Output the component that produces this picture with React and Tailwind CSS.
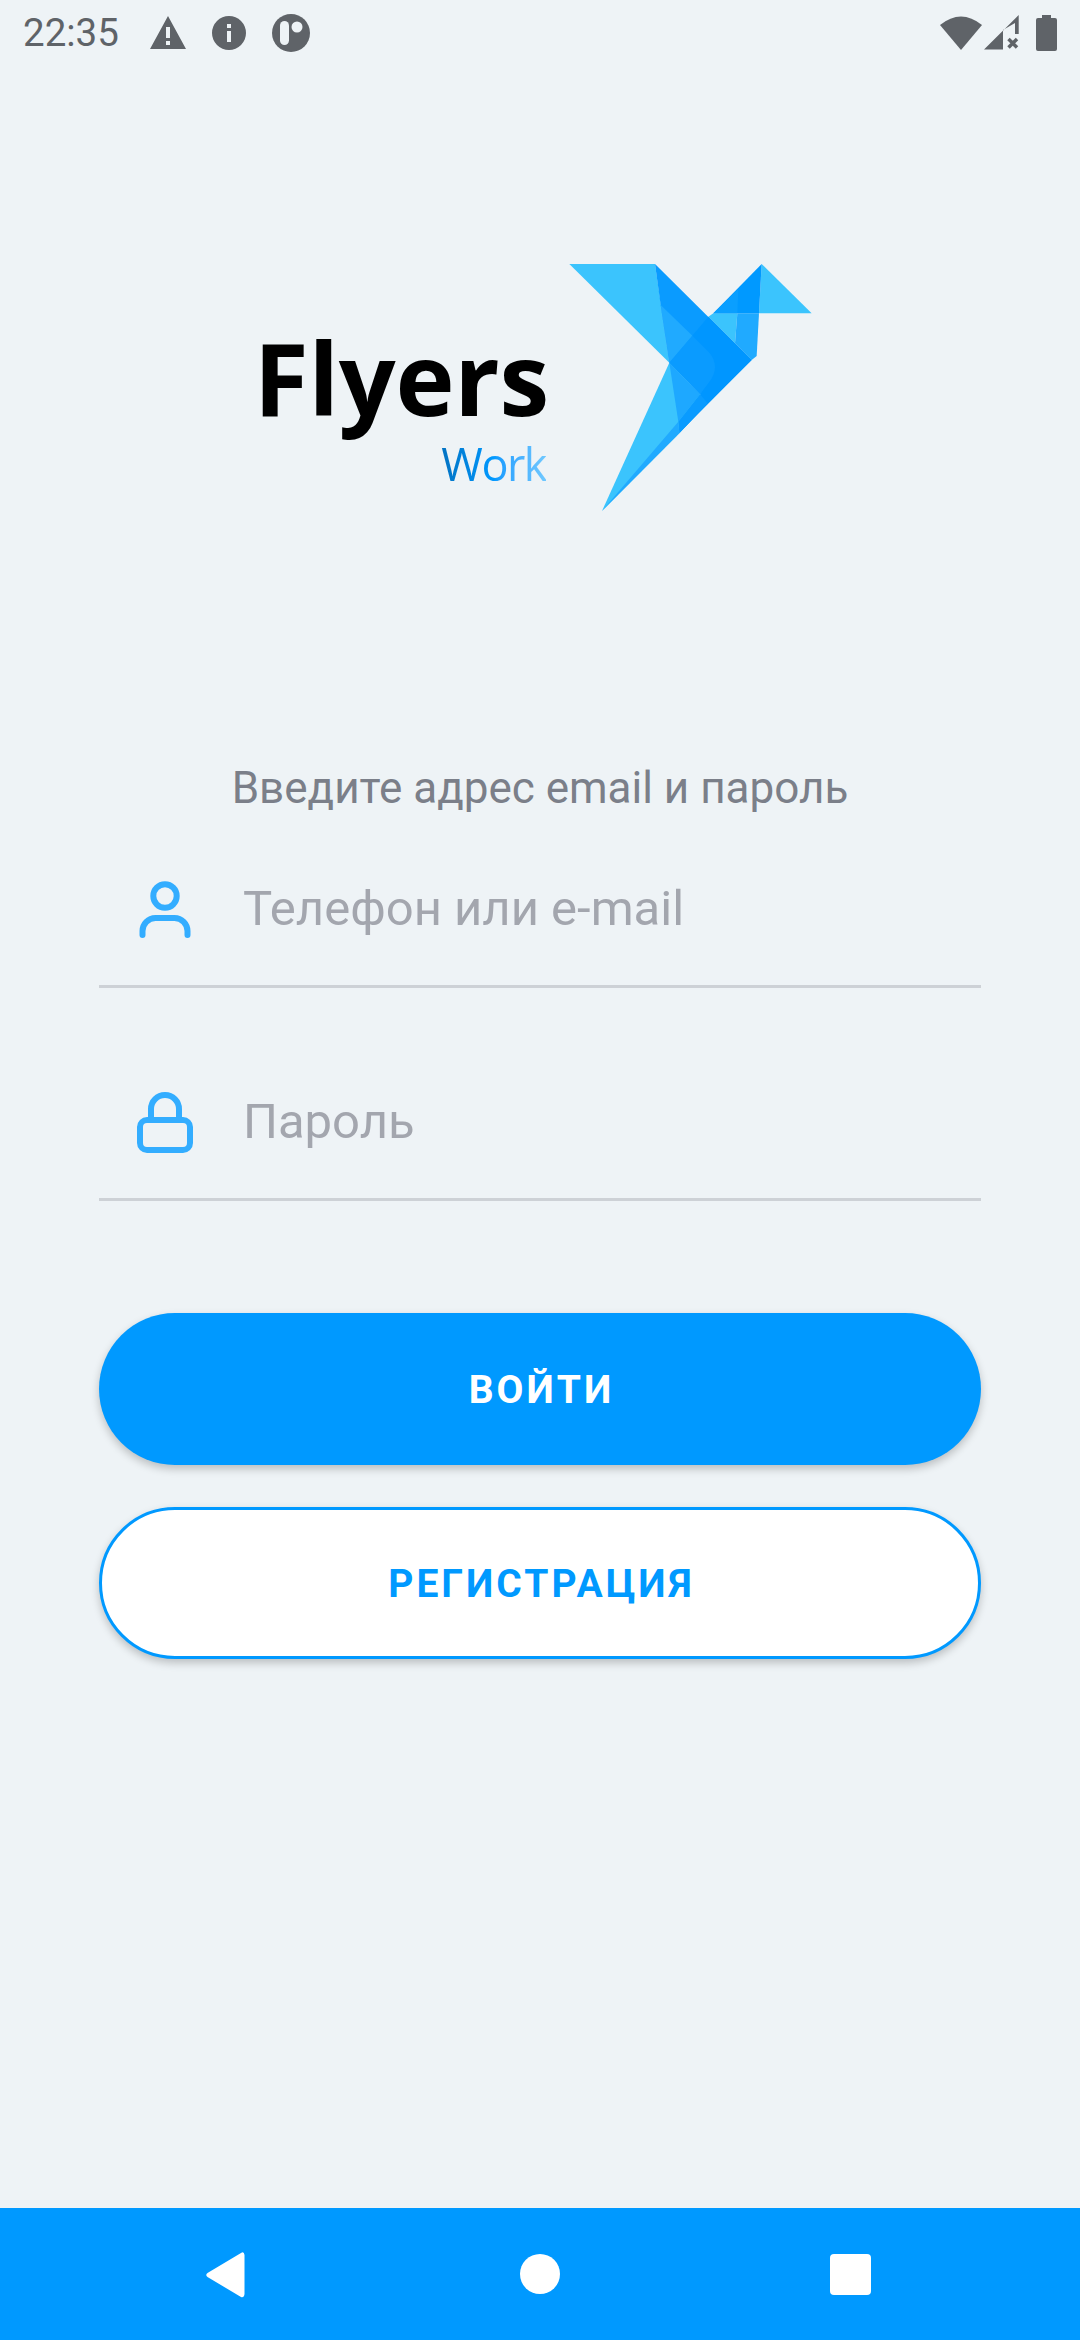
const ROBOTO = "font-['Roboto',sans-serif]";

function Bird() {
  return (
    <svg width="290" height="270" viewBox="0 0 870 810" className="shrink-0">
      <polygon points="88,42 345,42 388,338" fill="#3bc4fd" />
      <polygon points="388,338 186,783 418,550 500,462 480,433" fill="#3bc4fd" />
      <polygon points="665,42 815,190 657,190" fill="#3bc4fd" />
      <polygon points="505,200 520,190 592,190 585,280" fill="#3bc4fd" />
      <polygon points="592,190 657,190 650,318 635,330 585,280" fill="#20aaff" />
      <polygon points="665,42 520,190 657,190" fill="#0099ff" />
      <polygon points="595,116 520,190 592,190" fill="#0a9fff" />
      <polygon points="345,42 635,330 503,460 480,433 388,338 362,165" fill="#0a9bff" />
      <polygon points="362,165 458,258 388,338" fill="#20aaff" />
      <path d="M388 338 L505 200 L635 330 L418 548 L500 400 Q545 350 505 305 L458 258 Z" fill="#0096ff" />
      <path d="M458 258 L505 305 Q545 350 505 400 L480 433 L388 338 Z" fill="#0a9bff" />
      <polygon points="388,338 480,433 415,515" fill="#1ea8ff" />
      <polygon points="480,433 503,460 418,550 415,515" fill="#0a9bff" />
      <polygon points="415,515 418,550 186,783" fill="#20aaff" />
    </svg>
  );
}

function Logo() {
  return (
    <div className="mt-[184px] flex h-[270px] items-start pl-[256px]">
      <div className="mt-[77px] flex w-[293px] flex-col items-end font-['Open_Sans',sans-serif]">
        <div className="text-[100px] leading-[100px] font-bold tracking-[-0.2px] text-black">Flyers</div>
        <div className="mt-[11px] mr-[3px] bg-gradient-to-r from-[#0272c2] via-[#0099ff] to-[#6fc8ff] bg-clip-text text-[45px] leading-[52px] font-normal tracking-[-1.5px] text-transparent">
          Work
        </div>
      </div>
      <div className="ml-[-9px]">
        <Bird />
      </div>
    </div>
  );
}

function StatusBar() {
  return (
    <div className="flex h-[66px] items-center text-[#5f6368]">
      <span className={`ml-[23px] w-[95px] text-[38.5px] leading-none ${ROBOTO}`}>22:35</span>
      <svg width="38" height="36" viewBox="0 0 38 36" className="ml-[31px]">
        <path fillRule="evenodd" d="M19 1 L37 34 H1 Z M17 12 V23 H21 V12 Z M17 26 V30 H21 V26 Z" fill="currentColor" />
      </svg>
      <svg width="36" height="36" viewBox="0 0 36 36" className="ml-[24px]">
        <path fillRule="evenodd" d="M18 1 A17 17 0 1 0 18 35 A17 17 0 1 0 18 1 Z M16 9 V13 H20 V9 Z M16 16 V27 H20 V16 Z" fill="currentColor" />
      </svg>
      <svg width="38" height="38" viewBox="0 0 38 38" className="ml-[25px]">
        <circle cx="19" cy="19" r="19" fill="currentColor" />
        <rect x="8" y="7" width="9" height="24" rx="4.5" fill="#eef3f6" />
        <circle cx="25" cy="13" r="5.5" fill="#eef3f6" />
      </svg>
      <svg width="42" height="36" viewBox="0 0 42 36" className="ml-auto">
        <path d="M0 10 Q21 -7 42 10 L21 35 Z" fill="currentColor" />
      </svg>
      <svg width="36" height="36" viewBox="0 0 36 36" className="ml-[2px]">
        <path d="M34.7 0 V19 H31 V8 L19 15 V34.5 H0 Z" fill="currentColor" />
        <path d="M24.5 24 L33 32.5 M33 24 L24.5 32.5" stroke="currentColor" strokeWidth="3.5" />
      </svg>
      <svg width="22" height="36" viewBox="0 0 22 36" className="mr-[22px] ml-[16px]">
        <path d="M6 0 H15 V3 H19 Q21 3 21 5 V34 Q21 36 19 36 H2 Q0 36 0 34 V5 Q0 3 2 3 H6 Z" fill="currentColor" />
      </svg>
    </div>
  );
}

function UserIcon() {
  return (
    <svg width="60" height="70" viewBox="135 875 60 70" fill="none" stroke="#33adff" strokeWidth="6" strokeLinecap="round">
      <circle cx="165" cy="896" r="11.7" />
      <path d="M142.5 935 v-4 a13 13 0 0 1 13 -13 h19 a13 13 0 0 1 13 13 v4" />
    </svg>
  );
}

function LockIcon() {
  return (
    <svg width="60" height="70" viewBox="135 1088 60 70" fill="none" stroke="#33adff" strokeWidth="6">
      <rect x="140" y="1120" width="50" height="30" rx="7" />
      <path d="M151 1120 v-11 a14 14 0 0 1 28 0 v11" />
    </svg>
  );
}

function Field({ icon, label, className }) {
  return (
    <div className={`mx-[99px] flex h-[113px] items-start border-b-[3px] border-[#cdd1d6] pl-[36px] ${className}`}>
      {icon}
      <span className={`ml-[48px] text-[49px] leading-[68px] text-[#a3a6ae] ${ROBOTO}`}>{label}</span>
    </div>
  );
}

function NavBar() {
  return (
    <div className="mt-auto flex h-[132px] items-start bg-[#0099ff] pt-[44px]">
      <svg width="39" height="46" viewBox="0 0 39 46" className="ml-[206px]">
        <path d="M35 1 Q38 -1 38.5 3 V42 Q38 46 35 45 L1.5 25 Q-1 23 1.5 21 Z" fill="#fff" />
      </svg>
      <div className="mt-[2px] ml-[275px] h-[40px] w-[40px] rounded-full bg-white" />
      <div className="mt-[2px] ml-[270px] h-[41px] w-[41px] rounded-[4px] bg-white" />
    </div>
  );
}

export default function App() {
  return (
    <div className={`flex h-[2340px] w-[1080px] flex-col bg-[#eef3f6] ${ROBOTO}`}>
      <StatusBar />
      <Logo />
      <div className="mt-[243px] text-center text-[44px] leading-[50px] text-[#7b7f89]">Введите адрес email и пароль</div>
      <Field icon={<UserIcon />} label="Телефон или e-mail" className="mt-[62px]" />
      <Field icon={<LockIcon />} label="Пароль" className="mt-[100px]" />
      <button className="mx-[99px] mt-[112px] h-[152px] rounded-full bg-[#0099ff] pt-[3px] pl-[3px] text-[39px] font-bold tracking-[3px] text-white shadow-[0_4px_8px_rgba(0,0,0,0.22)]">
        ВОЙТИ
      </button>
      <button className="mx-[99px] mt-[42px] h-[152px] rounded-full border-[3px] border-[#0099ff] bg-white pt-[3px] pl-[3px] text-[39px] font-bold tracking-[3px] text-[#0099ff] shadow-[0_4px_8px_rgba(0,0,0,0.22)]">
        РЕГИСТРАЦИЯ
      </button>
      <NavBar />
    </div>
  );
}
